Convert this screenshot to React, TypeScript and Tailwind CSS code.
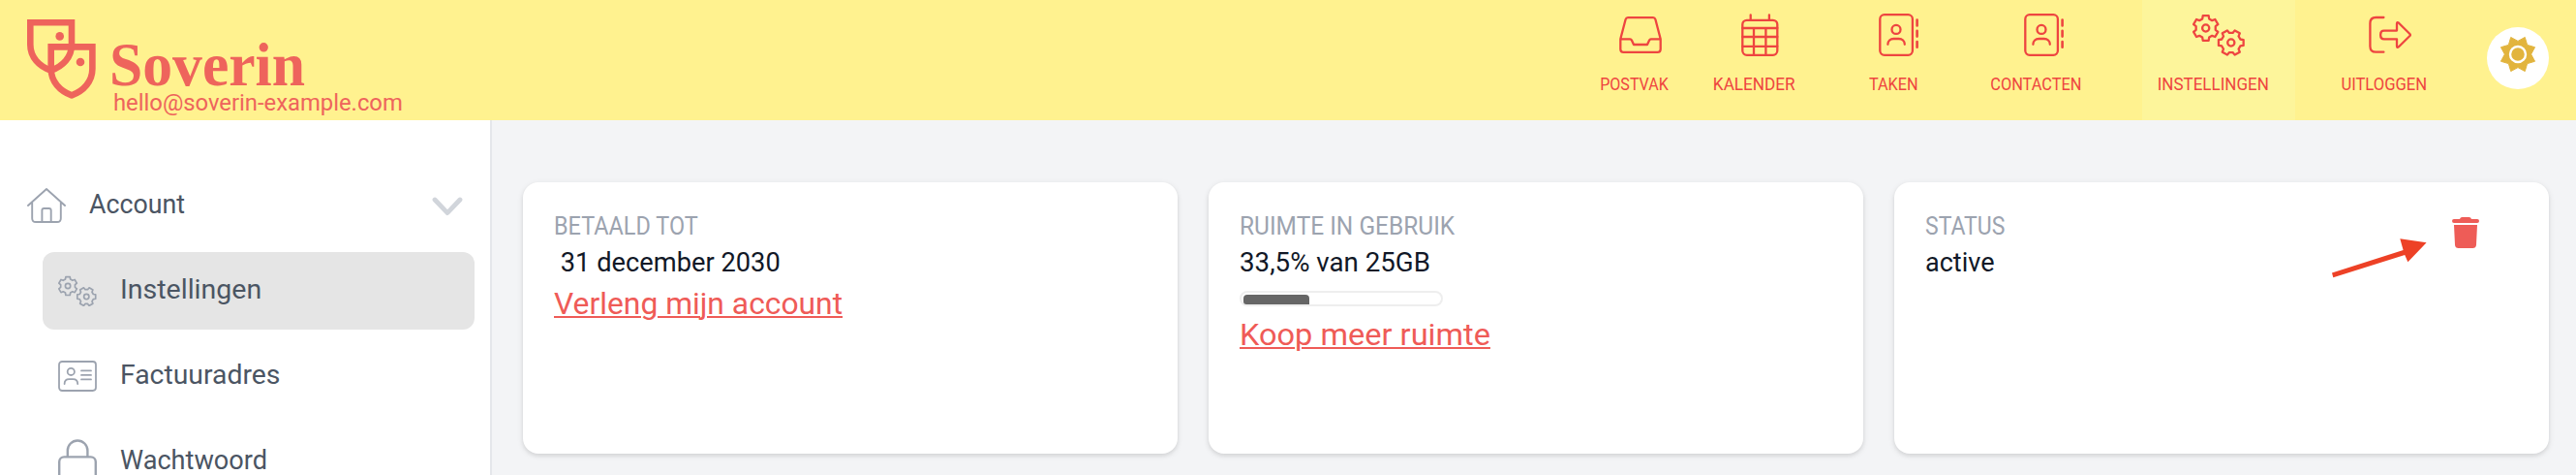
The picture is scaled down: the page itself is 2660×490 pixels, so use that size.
import React from "react";

type IconProps = { className?: string };

function gear(cx: number, cy: number, start: number) {
  const root = 10;
  const tip = 13.2;
  const points: string[] = [];
  for (let i = 0; i < 6; i++) {
    const mid = start + i * 60;
    const corners: [number, number][] = [
      [mid - 20, root + 0.2],
      [mid - 13, tip],
      [mid + 13, tip],
      [mid + 20, root + 0.2],
    ];
    for (const [deg, r] of corners) {
      const a = (deg * Math.PI) / 180;
      points.push(`${(cx + r * Math.cos(a)).toFixed(2)} ${(cy + r * Math.sin(a)).toFixed(2)}`);
    }
  }
  return `M${points.join("L")}Z`;
}

const GEAR_A = gear(13.7, 15, -90);
const GEAR_B = gear(39.8, 30, -60);

function GearsIcon({ className }: IconProps) {
  return (
    <svg viewBox="0 0 54.4 44" fill="none" stroke="currentColor" strokeWidth="2.3" strokeLinejoin="round" className={className}>
      <path d={GEAR_A} />
      <circle cx="13.7" cy="15" r="3.6" />
      <path d={GEAR_B} />
      <circle cx="39.8" cy="30" r="3.6" />
    </svg>
  );
}

function InboxIcon({ className }: IconProps) {
  return (
    <svg viewBox="0 0 44 44" fill="none" stroke="currentColor" strokeWidth="2.3" strokeLinecap="round" strokeLinejoin="round" className={className}>
      <path d="M1.3 26.3 6.6 6Q7.2 4.1 9 4.1H35Q36.8 4.1 37.4 6L42.7 26.3V36.8Q42.7 39.9 39.6 39.9H4.4Q1.3 39.9 1.3 36.8ZH11.2Q12.4 26.3 12.9 27.4L15 32H29L31.1 27.4Q31.6 26.3 32.8 26.3H42.7" />
    </svg>
  );
}

function CalendarIcon({ className }: IconProps) {
  return (
    <svg viewBox="0 0 39 44" fill="none" stroke="currentColor" strokeWidth="2.3" strokeLinecap="round" className={className}>
      <rect x="1.3" y="6.8" width="36" height="36" rx="4.5" />
      <path d="M9.7 1.3V6M28.9 1.3V6M1.3 15H37.3M1.3 24H37.3M1.3 33.8H37.3M13 15V42.5M25.4 15V42.5" />
    </svg>
  );
}

function BookIcon({ className }: IconProps) {
  return (
    <svg viewBox="0 0 42 44" fill="none" stroke="currentColor" strokeWidth="2.3" strokeLinecap="round" className={className}>
      <rect x="1.3" y="1.2" width="33.6" height="41.6" rx="4.5" />
      <circle cx="18" cy="16.4" r="4.5" />
      <path d="M9.4 31.8C9.4 28.2 12 26 15.4 26H20.8C24.2 26 26.8 28.2 26.8 31.8" />
      <path d="M39.6 6.6V12.4M39.6 17.8V23.6M39.6 29V34.8" strokeWidth="2.6" />
    </svg>
  );
}

function LogoutIcon({ className }: IconProps) {
  return (
    <svg viewBox="0 0 44 44" fill="none" stroke="currentColor" strokeWidth="2.3" strokeLinecap="round" strokeLinejoin="round" className={className}>
      <path d="M15.4 4H7.4Q1.4 4 1.4 10V33.7Q1.4 39.7 7.4 39.7H15.4" />
      <path d="M29 17.6H15.8Q12.2 17.6 12.2 21.2V22.7Q12.2 26.3 15.8 26.3H29V33.3Q29 36 31 34.2L42.4 23Q43.3 22 42.4 21L31 9.7Q29 8 29 10.6Z" />
    </svg>
  );
}

function SunIcon({ className }: IconProps) {
  const points: string[] = [];
  for (let i = 0; i < 16; i++) {
    const a = ((i * 22.5 - 67.5) * Math.PI) / 180;
    const r = i % 2 === 0 ? 19 : 13.6;
    points.push(`${(20 + r * Math.cos(a)).toFixed(2)},${(20 + r * Math.sin(a)).toFixed(2)}`);
  }
  return (
    <svg viewBox="0 0 40 40" className={className}>
      <polygon points={points.join(" ")} fill="#e2b43d" stroke="#e2b43d" strokeWidth="1" strokeLinejoin="round" />
      <circle cx="20" cy="20" r="8" fill="#e2b43d" stroke="#ffffff" strokeWidth="2.4" />
    </svg>
  );
}

function HouseIcon({ className }: IconProps) {
  return (
    <svg viewBox="0 0 40 40" fill="none" stroke="currentColor" strokeWidth="1.9" strokeLinecap="round" strokeLinejoin="round" className={className}>
      <path d="M1 20 20 3 39 20M5.2 17V33.2Q5.2 37 9 37H31Q34.8 37 34.8 33.2V17M15.4 37V25Q15.4 23 17.4 23H22.7Q24.7 23 24.7 25V37" />
    </svg>
  );
}

function CardIcon({ className }: IconProps) {
  return (
    <svg viewBox="0 0 40 32" fill="none" stroke="currentColor" strokeWidth="1.8" strokeLinecap="round" className={className}>
      <rect x="1" y="1" width="38" height="30" rx="3.2" />
      <circle cx="13.3" cy="11.4" r="3.6" />
      <path d="M6.6 24C6.6 21 8.6 19.2 11.4 19.2H15.4C18.2 19.2 20.2 21 20.2 24" />
      <path d="M24 10.4H34M24 14.9H34M24 19.4H34" />
    </svg>
  );
}

function LockIcon({ className }: IconProps) {
  return (
    <svg viewBox="0 0 40 46" fill="none" stroke="currentColor" strokeWidth="2.4" className={className}>
      <rect x="1.2" y="18.4" width="37.6" height="30" rx="5" />
      <path d="M9.8 18.4V11.8A10.3 10.3 0 0 1 30.4 11.8V18.4" />
    </svg>
  );
}

function TrashIcon({ className }: IconProps) {
  return (
    <svg viewBox="0 0 28 32" fill="currentColor" className={className}>
      <path d="M2 2.1H8Q8.4 0 10.5 0H17.5Q19.6 0 20 2.1H26Q28 2.1 28 4Q28 6 26 6H2Q0 6 0 4Q0 2.1 2 2.1ZM2 8H26L25 28.6Q24.8 32 21.6 32H6.4Q3.2 32 3 28.6Z" />
    </svg>
  );
}

function Shields({ className }: IconProps) {
  return (
    <svg viewBox="0 0 72 84" fill="none" stroke="currentColor" strokeWidth="6.6" className={className}>
      <path d="M3.3 3.3H46V26C46 39 37 48.4 24.6 52.6C12.3 48.4 3.3 39 3.3 26Z" />
      <path d="M24.7 28.4H67.4V51C67.4 64 58.4 73.8 46 78.3C33.7 73.8 24.7 64 24.7 51Z" />
      <circle cx="33.7" cy="17.4" r="4.3" fill="currentColor" stroke="none" />
      <circle cx="55" cy="44" r="4.3" fill="currentColor" stroke="none" />
    </svg>
  );
}

const NAV = [
  { label: "POSTVAK", cell: "w-[123px]", fit: "scale-x-[0.916]", icon: <InboxIcon className="h-[44px] w-[44px]" /> },
  { label: "KALENDER", cell: "w-[124px]", fit: "scale-x-[0.98]", icon: <CalendarIcon className="h-[44px] w-[39px]" /> },
  { label: "TAKEN", cell: "w-[164px]", fit: "scale-x-[0.93]", icon: <BookIcon className="h-[44px] w-[42px]" /> },
  { label: "CONTACTEN", cell: "mr-[44px] w-[131px]", fit: "scale-x-[0.935]", icon: <BookIcon className="ml-[5px] h-[44px] w-[42px]" /> },
  { label: "INSTELLINGEN", cell: "w-[158px] bg-[#fdf59b] pr-[11px]", fit: "scale-x-[0.971]", icon: <GearsIcon className="h-[44px] w-[54.4px]" /> },
  { label: "UITLOGGEN", cell: "w-[184px]", fit: "scale-x-[0.948]", icon: <LogoutIcon className="h-[44px] w-[44px]" /> },
];

const ITEMS = [
  { label: "Instellingen", row: "bg-[#e5e5e5]", fit: "scale-x-[1.019]", icon: <GearsIcon className="h-[32.4px] w-[40px]" /> },
  { label: "Factuuradres", row: "", fit: "scale-x-[1.012]", icon: <CardIcon className="h-[32px] w-[40px]" /> },
  { label: "Wachtwoord", row: "", fit: "scale-x-[0.969]", icon: <LockIcon className="h-[46px] w-[40px]" /> },
];

function Card({ label, labelFit, value, valueFit, children }: {
  label: string; labelFit: string; value: string; valueFit: string; children?: React.ReactNode;
}) {
  return (
    <section className="flex h-[280px] flex-col items-start rounded-2xl bg-white px-8 pt-[30px] shadow-[0_2px_6px_rgba(0,0,0,0.1),0_2px_4px_rgba(0,0,0,0.06)]">
      <h2 className={`origin-left text-[25px] leading-8 whitespace-pre text-[#9ca3af] ${labelFit}`}>{label}</h2>
      <p className={`mt-px origin-left text-[28px] leading-10 whitespace-pre text-[#111827] ${valueFit}`}>{value}</p>
      {children}
    </section>
  );
}

export default function App() {
  return (
    <div className="flex h-[490px] w-[2660px] flex-col overflow-hidden bg-[#f3f4f6] font-['Roboto',sans-serif]">
      <header className="flex h-[124px] shrink-0 bg-[#fff28f] text-[#ee4540]">
        <div className="flex pl-7 text-[#ee645c]">
          <Shields className="mt-5 h-[84px] w-[72px]" />
          <div className="flex flex-col items-start pl-[13px]">
            <div className="mt-[46px] origin-left scale-x-[0.963] font-['Liberation_Serif',serif] text-[64px] leading-[42px] font-bold">Soverin</div>
            <div className="mt-[6px] ml-[4px] origin-left scale-x-[0.992] text-2xl leading-6">hello@soverin-example.com</div>
          </div>
        </div>
        <nav className="ml-auto flex">
          {NAV.map((n) => (
            <a key={n.label} className={`flex flex-col items-center pt-[14px] ${n.cell}`}>
              <span className="ml-[12px] flex">{n.icon}</span>
              <span className={`mt-[19px] text-[17.5px] leading-5 ${n.fit}`}>{n.label}</span>
            </a>
          ))}
        </nav>
        <button className="mt-7 mr-7 ml-[14px] flex h-16 w-16 justify-center rounded-full bg-white pt-2">
          <SunIcon className="h-10 w-10" />
        </button>
      </header>
      <div className="flex min-h-0 flex-1">
        <aside className="flex w-[508px] shrink-0 flex-col gap-2 border-r-2 border-[#e5e7eb] bg-white pt-12">
          <div className="flex h-20 shrink-0 items-center pr-[28px] pl-7 text-[#4b5563]">
            <HouseIcon className="h-10 w-10 text-[#9ca3af]" />
            <span className="mt-[-2px] ml-6 origin-left scale-x-[0.955] text-[28px] leading-10">Account</span>
            <svg viewBox="0 0 32 20" fill="none" stroke="#d1d5db" strokeWidth="4.8" strokeLinecap="round" strokeLinejoin="round" className="mt-[2px] ml-auto h-5 w-8">
              <path d="M3 3 16 16.6 29 3" />
            </svg>
          </div>
          {ITEMS.map((n) => (
            <div key={n.label} className={`mr-4 ml-11 flex h-20 shrink-0 items-center rounded-xl pl-4 text-[#4b5563] ${n.row}`}>
              <span className="flex text-[#9ca3af]">{n.icon}</span>
              <span className={`mt-[-2px] ml-6 origin-left text-[28px] leading-10 ${n.fit}`}>{n.label}</span>
            </div>
          ))}
        </aside>
        <main className="relative grid flex-1 grid-cols-3 content-start gap-8 pt-16 pr-7 pl-8">
          <Card label="BETAALD TOT" labelFit="scale-x-[0.938]" value=" 31 december 2030" valueFit="scale-x-[0.974]">
            <a className="-mt-px origin-left scale-x-[0.994] text-[32px] leading-[46px] text-[#ef5b57] underline decoration-2 underline-offset-2">Verleng mijn account</a>
          </Card>
          <Card label="RUIMTE IN GEBRUIK" labelFit="scale-x-[0.979]" value="33,5% van 25GB" valueFit="scale-x-[0.989]">
            <div className="mt-[9px] h-4 w-[210px] rounded-lg border-2 border-[#eeeeee] pt-[2px] pl-[2px]">
              <div className="h-[10px] w-[68px] rounded-t-[4px] rounded-bl-[3px] bg-[#666666]" />
            </div>
            <a className="mt-[6px] origin-left scale-x-[1.017] text-[32px] leading-[46px] text-[#ef5b57] underline decoration-2 underline-offset-2">Koop meer ruimte</a>
          </Card>
          <div className="relative">
            <Card label="STATUS" labelFit="scale-x-[0.92]" value="active" valueFit="scale-x-[0.965]" />
            <button className="absolute top-9 right-[72px] flex text-[#ee5c57]">
              <TrashIcon className="h-8 w-7" />
            </button>
            <svg viewBox="0 0 100 44" className="absolute top-[56px] left-[451px] h-[44px] w-[100px]" fill="#ed4126">
              <path d="M1 37.6 74.6 14 71.3 2.2 98.6 6.3 79.4 26.2 76.2 19 2.3 42.3Z" />
            </svg>
          </div>
        </main>
      </div>
    </div>
  );
}
